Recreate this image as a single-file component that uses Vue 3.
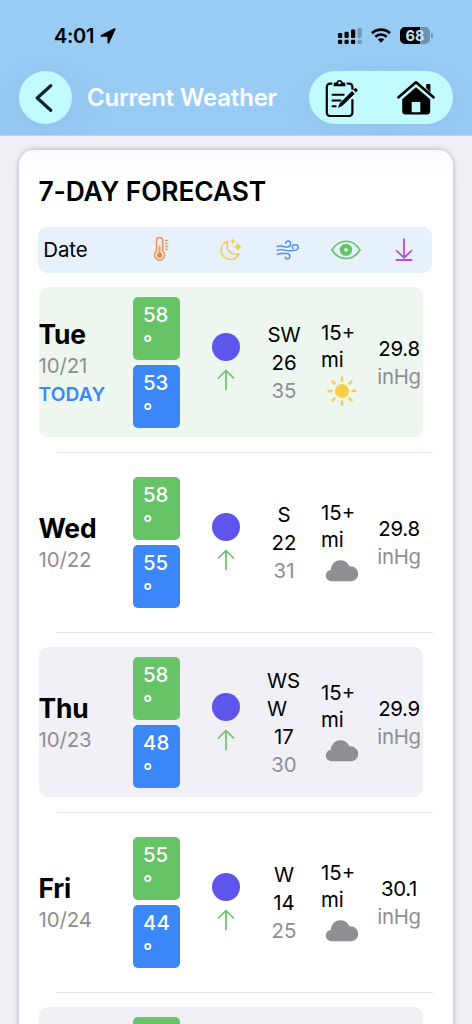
<script setup>
const days = [
  { day: 'Tue', date: '10/21', today: true, high: 58, low: 53, dir: 'SW', wind: 26, gust: 35, sky: 'sun', pressure: '29.8' },
  { day: 'Wed', date: '10/22', high: 58, low: 55, dir: 'S', wind: 22, gust: 31, sky: 'cloud', pressure: '29.8' },
  { day: 'Thu', date: '10/23', high: 58, low: 48, dir: 'WSW', wind: 17, gust: 30, sky: 'cloud', pressure: '29.9' },
  { day: 'Fri', date: '10/24', high: 55, low: 44, dir: 'W', wind: 14, gust: 25, sky: 'cloud', pressure: '30.1' },
]
const rays = [0, 45, 90, 135, 180, 225, 270, 315]
</script>

<template>
  <div class="screen">
    <header class="top">
      <div class="status">
        <span class="time">4:01</span>
        <svg class="loc" width="16" height="16" viewBox="0 0 16 16"><path d="M14.600 1.200 8.400 14.500V7.900H1.500Z" stroke="#000" stroke-width="1.900" stroke-linejoin="round" /></svg>
        <svg class="signal" width="25" height="18" viewBox="0 0 25 18">
          <rect x="0" y="6" width="4.200" height="5" rx="1.200" /><rect x="6.500" y="4.800" width="4.200" height="6.200" rx="1.200" /><rect x="13" y="2.600" width="4.200" height="8.400" rx="1.200" />
          <rect x="0" y="12.800" width="4.200" height="4.200" rx="1.200" /><rect x="6.500" y="12.800" width="4.200" height="4.200" rx="1.200" /><rect x="13" y="12.800" width="4.200" height="4.200" rx="1.200" />
          <g opacity=".25"><rect x="19.500" y="1" width="4.200" height="10" rx="1.200" /><rect x="19.500" y="12.800" width="4.200" height="4.200" rx="1.200" /></g>
        </svg>
        <svg class="wifi" width="20" height="15" viewBox="0 0 20 15">
          <g fill="none" stroke="#000" stroke-width="2.700"><path d="M1 5.300a13 13 0 0 1 18 0" /><path d="M4.300 8.800a8.200 8.200 0 0 1 11.400 0" /></g>
          <path d="M10 14.700 6.800 11.500a4.500 4.500 0 0 1 6.400 0Z" />
        </svg>
        <div class="battery"><span>68</span></div>
        <i class="nub"></i>
      </div>
      <nav class="bar">
        <button class="back">
          <svg width="18" height="28" viewBox="0 0 18 28"><path d="M15.700 1.700 2.200 14l13.500 12.300" fill="none" stroke="#0b2530" stroke-width="3.200" stroke-linecap="round" stroke-linejoin="round" /></svg>
        </button>
        <h1>Current Weather</h1>
        <div class="actions">
          <svg class="note" width="33" height="40" viewBox="0 0 33 40">
            <path d="M6.500 5.600H5A3.200 3.200 0 0 0 1.800 8.800v26A3.200 3.200 0 0 0 5 38h19.200a3.200 3.200 0 0 0 3.200-3.200V22M22.500 5.600h1.700a3.200 3.200 0 0 1 3.200 3.200v2" fill="none" stroke="#000" stroke-width="2.200" stroke-linecap="round" />
            <path fill-rule="evenodd" d="M8.600 8.300V6.200c0-1 .7-1.700 1.700-1.700h1.100a3.200 3.200 0 0 1 6.200 0h1.100c1 0 1.700.7 1.700 1.700v2.100Zm5.900-4.700a1.300 1.300 0 1 0 0 2.600 1.300 1.300 0 0 0 0-2.600Z" />
            <path d="M7.500 16.800h11.200M7.500 22.400h8M7.500 28.200h3.200" stroke="#000" stroke-width="2" stroke-linecap="round" />
            <path d="m13 29.700 1.600-4.200L27 13l2.700 2.700-12.500 12.400Z" />
            <path d="m28.300 11.800 1.300-1.200c1.600-1.500 4.100.9 2.600 2.500L31 14.400Z" />
          </svg>
          <svg class="home" width="38" height="36" viewBox="0 0 38 36">
            <path d="M1.500 17.300 19 2.300l17.500 15" fill="none" stroke="#000" stroke-width="2.600" stroke-linecap="round" stroke-linejoin="round" />
            <path d="M29.200 8V5.300c0-.8.400-1.200 1.200-1.200h1.800c.8 0 1.200.4 1.200 1.200v7.300Z" />
            <path fill-rule="evenodd" d="M19 7.200 33.200 19.300v11.900c0 2-1.100 3.300-3.300 3.300H8.500c-2.200 0-3.300-1.300-3.300-3.300V19.300Zm-4.300 14.700v10.300h8.600V21.900Z" />
          </svg>
        </div>
      </nav>
    </header>

    <main class="card">
      <h2>7-DAY FORECAST</h2>
      <div class="legend">
        <span class="legend-date">Date</span>
        <svg class="thermo" width="15" height="25" viewBox="0 0 15 25" fill="none" stroke="#ee9650">
          <path d="M2.500 14.200V3.500a3.100 3.100 0 0 1 6.200 0v10.700a5 5 0 1 1-6.200 0Z" stroke-width="1.600" />
          <path d="M5.600 9.500V18" stroke-width="1.800" stroke-linecap="round" /><circle cx="5.600" cy="18.200" r="2.700" fill="#ee8a3c" stroke="none" />
          <path d="M11 3.500h3.200M11 6.500h2.500M11 9.500h3.200M11 12.500h2.500" stroke-width="1.300" />
        </svg>
        <svg class="moon" width="24" height="25" viewBox="0 0 24 25">
          <path d="M7.600 4.500C3.500 5.500 1 9.200 1 13.100c0 5.300 4.100 9.400 9.300 9.400 4 0 7.300-2.100 8.600-5.800C11.500 19 5 13 7.600 4.500Z" fill="none" stroke="#f3cb4e" stroke-width="1.600" stroke-linejoin="round" />
          <path d="M12.800 1.200q.5 2.600 2.600 3.100-2.100.5-2.600 3.100-.5-2.600-2.600-3.100 2.100-.5 2.600-3.100ZM17.900 5q.8 4 4.600 4.700-3.800.7-4.600 4.700-.8-4-4.600-4.700 3.800-.7 4.600-4.700Z" fill="#f7ce46" />
        </svg>
        <svg class="wind-icon" width="24" height="20" viewBox="0 0 24 20" fill="none" stroke="#4d90f5" stroke-width="1.500" stroke-linecap="round">
          <path d="M1.200 6.500c4-1.800 7 .8 10.500.4 4-.4 4-5.700.4-5.800-1.600 0-2.500 1-2.300 2.200" />
          <path d="M1.200 10.300c4.500-2.200 8.200 1 14.100.5 3.800-.2 7-1 7-3.500 0-3.100-5-3.500-6-.8-.3 1 0 1.600.8 1.900" />
          <path d="M1.200 14.400c3.700-1.700 6.500-.8 9.700-.8 3.700 0 4.200 5.200.5 5.300-1.200 0-2-.7-2-1.700" />
        </svg>
        <svg class="eye" width="30" height="20" viewBox="0 0 30 20">
          <path d="M1 10C4.500 4.300 9 1.200 15 1.200S25.500 4.300 29 10c-3.500 5.700-8 8.500-14 8.500S4.500 15.700 1 10Z" fill="none" stroke="#67c466" stroke-width="1.600" stroke-linejoin="round" />
          <circle cx="15" cy="9.900" r="4" fill="none" stroke="#67c466" stroke-width="4.400" />
        </svg>
        <svg class="down" width="18" height="24" viewBox="0 0 18 24" fill="none" stroke="#bd4bdc" stroke-width="1.800" stroke-linecap="round"><path d="M9 1.200v18M1.700 12.800 9 19.700l7.300-6.900M1.500 22h15" /></svg>
      </div>

      <template v-for="(d, i) in days" :key="d.day">
        <section class="row" :class="{ today: d.today, shaded: i > 0 && i % 2 === 0 }">
          <div class="date">
            <b>{{ d.day }}</b><span>{{ d.date }}</span><strong v-if="d.today">TODAY</strong>
          </div>
          <div class="temps">
            <div class="temp high"><span>{{ d.high }}</span><span class="deg">°</span></div>
            <div class="temp low"><span>{{ d.low }}</span><span class="deg">°</span></div>
          </div>
          <div class="trend">
            <i></i>
            <svg width="18" height="22" viewBox="0 0 18 22" fill="none" stroke="#67c466" stroke-width="1.700" stroke-linecap="round" stroke-linejoin="round"><path d="M9 20.500V1.500M1.500 9 9 1.500 16.500 9" /></svg>
          </div>
          <div class="wind">
            <span class="dir">{{ d.dir }}</span><span>{{ d.wind }}</span><span class="muted">{{ d.gust }}</span>
          </div>
          <div class="vis">
            <span>15+<br />mi</span>
            <svg v-if="d.sky === 'sun'" width="30" height="30" viewBox="0 0 30 30">
              <circle cx="15" cy="15" r="7" fill="#f7ce46" />
              <path v-for="r in rays" :key="r" d="M15 1.500v3" :transform="`rotate(${r} 15 15)`" stroke="#f7ce46" stroke-width="2.400" stroke-linecap="round" />
            </svg>
            <svg v-else width="34" height="30" viewBox="0 0 34 30"><path d="M7.400 25.300C3.500 25.300.8 22.900.8 19.500c0-3 2-5.100 4.900-5.400C6.200 8.300 10 4.200 15.400 4.200c4.200 0 7.400 2.300 8.900 6 5-.3 8.900 3 8.900 7.500 0 4.400-3.300 7.600-7.900 7.600Z" fill="#8e8e93" /></svg>
          </div>
          <div class="press"><span>{{ d.pressure }}</span><span class="muted">inHg</span></div>
        </section>
        <hr />
      </template>
      <!-- top edge of the next day, below the fold -->
      <section class="row shaded">
        <div class="date"></div>
        <div class="temps"><div class="temp high"></div><div class="temp low"></div></div>
      </section>
    </main>
  </div>
</template>

<style>
body { overflow: hidden; }
</style>

<style scoped>
* { box-sizing: border-box; }
.screen { height: 1024px; overflow: hidden; background: #f1f0f6; font-family: Inter, "Liberation Sans", sans-serif; color: #000; }
.top { height: 136px; background: radial-gradient(70px 60px at 45px 108px, #90c3ef, #90c3ef00), radial-gradient(115px 60px at 385px 108px, #90c3ef, #90c3ef00), #98ccf5; border-bottom: 1px solid #b9d6ee; }
.status { display: flex; align-items: center; height: 71px; padding-left: 54px; }
.time { width: 46px; font-size: 20px; font-weight: 600; letter-spacing: -.3px; }
.loc { margin-right: 222px; }
.signal { margin-right: 8px; }
.wifi { margin-right: 9px; }
.battery { display: grid; place-items: center; width: 30px; height: 16.500px; border-radius: 5px; background: linear-gradient(90deg, #000 68%, #6d93b1 68%); color: #c5e1f8; font-size: 14.500px; font-weight: 700; line-height: 16px; }
.nub { width: 2px; height: 5px; margin-left: 1px; border-radius: 0 2px 2px 0; background: #6d93b1; }
.bar { display: flex; align-items: center; padding-left: 19px; height: 53px; }
.back { display: grid; place-items: center; width: 53px; height: 53px; padding: 0 4px 0 0; border: 0; border-radius: 50%; background: #c1faff; }
h1 { width: 222px; margin: 0 0 0 15px; color: #fff; font-size: 24px; font-weight: 600; letter-spacing: -.2px; white-space: nowrap; }
.actions { display: flex; align-items: center; width: 144px; height: 53px; padding-left: 16px; border-radius: 27px; background: #c1faff; }
.home { margin-left: 39px; }
.card { width: 434px; height: 900px; margin: 14px 0 0 19px; padding: 24px 20px 0 19.500px; border-radius: 15px 15px 0 0; background: linear-gradient(#fbfbfb, #fff 30px); box-shadow: 0 0 5px #0004, 0 0 18px #0000000d; }
h2 { margin: 0; font-size: 26.400px; line-height: 34px; font-weight: 600; letter-spacing: -.14px; white-space: nowrap; }
.legend { display: flex; align-items: center; width: 394px; height: 46px; margin: 18.500px 0 14.800px -.3px; padding-left: 5px; border-radius: 9px; background: #e6f1fc; }
.legend-date { width: 111px; font-size: 20.400px; }
.moon { margin-left: 51px; }
.wind-icon { margin-left: 32px; }
.eye { margin-left: 30.500px; }
.down { margin-left: 33.800px; }
.row { display: flex; align-items: center; width: 384.500px; height: 150px; border-radius: 9px; font-size: 20.400px; line-height: 28px; }
.today { background: #edf7ef; }
.shaded { background: #f1f0f6; }
.date { display: flex; flex-direction: column; width: 94.500px; padding-top: 2px; }
.date b { font-size: 26.400px; line-height: 33px; letter-spacing: -.2px; }
.date span { padding-top: 1px; letter-spacing: -.1px; }
.date span, .muted { color: #8e8e93; }
.date strong { color: #3b87f7; font-size: 19.200px; font-weight: 600; line-height: 28px; letter-spacing: .15px; }
.temps { display: grid; gap: 5px; }
.temp { display: flex; flex-direction: column; width: 46.500px; height: 63px; padding: 4px 0 0 10px; border-radius: 5px; color: #fff; font-weight: 500; }
.deg { line-height: 27px; }
.high { background: #67c466; }
.low { background: #3b87f7; }
.trend { display: flex; flex-direction: column; align-items: center; gap: 8px; width: 28px; margin-left: 32.500px; }
.trend i { width: 28px; height: 28px; border-radius: 50%; background: #5e55ec; }
.wind { display: flex; flex-direction: column; align-items: center; width: 34px; margin-left: 27px; padding-top: 2px; }
.dir { word-break: break-all; }
.vis { display: flex; flex-direction: column; width: 42px; margin-left: 20px; }
.vis > span { line-height: 27.500px; }
.vis svg { position: relative; align-self: center; margin: 2.500px 1px 0 0; }
.press { display: flex; flex-direction: column; align-items: center; width: 48px; margin-left: 12px; padding-top: 1px; letter-spacing: -.3px; }
hr { width: 376px; height: 1px; margin: 14.500px 0 14.500px 18.500px; border: 0; background: #e2e2e4; }
</style>
